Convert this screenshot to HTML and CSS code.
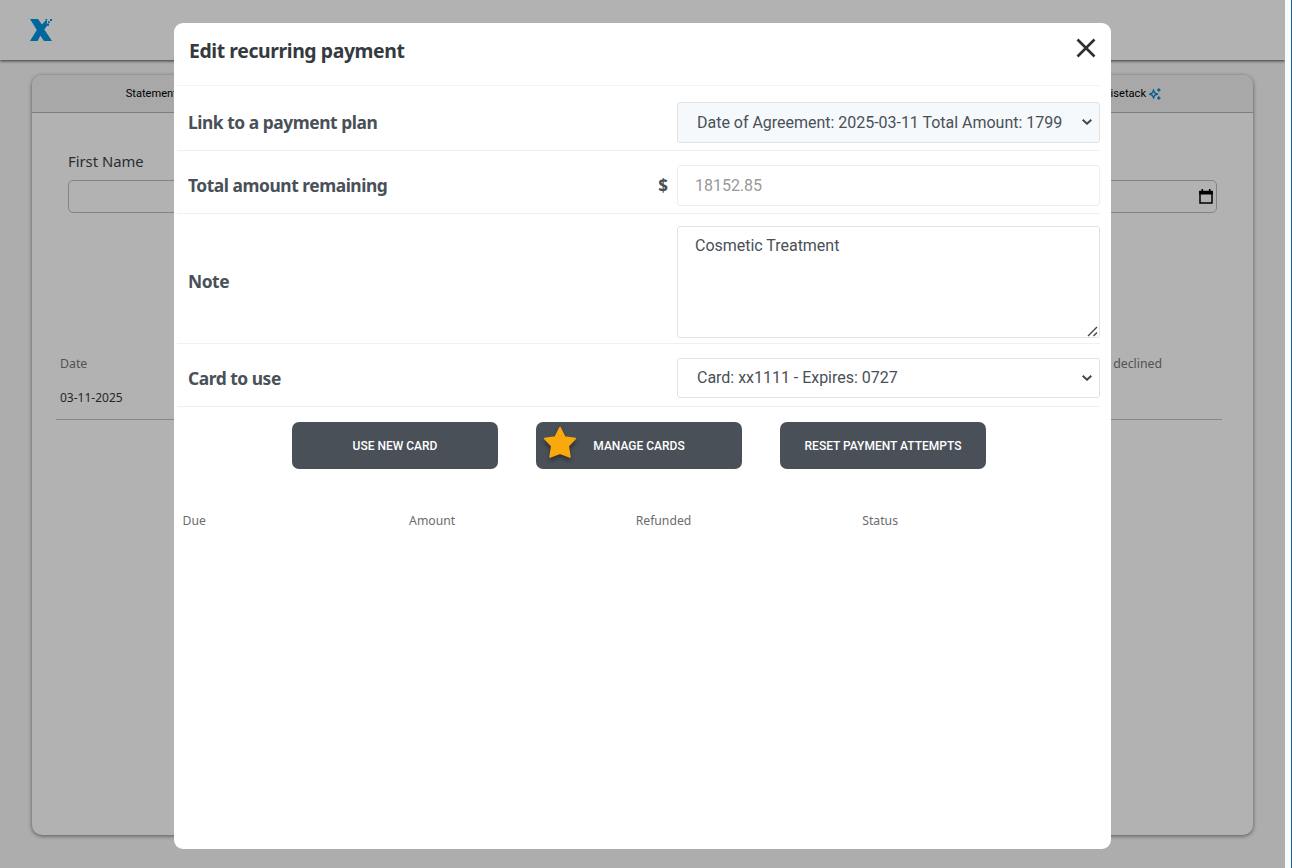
FILE: index.html
```html
<!DOCTYPE html>
<html lang="en">
<head>
    <meta charset="UTF-8">
    <meta name="viewport" content="width=device-width, initial-scale=1.0">
    <title>Edit recurring payment</title>
    <link rel="stylesheet" href="styles.css">
</head>
<body>
    <div class="page">
        <header class="topbar">
            <svg class="logo" width="22" height="22" viewBox="0 0 22 22" fill="#0094e0">
                <path d="M0 0h8l4 5.500 2-2.500 3.500 3-3.200 4.500L22 22h-8l-3.600-5.300L7.500 22H0l6.800-11z"/>
                <path d="M14.500 2H17v2.500h-2.500zM16.500 4.500H19v2.200h-2.500zM15.500 0h1.700v1.700h-1.700zM18 2.200h1.800V4H18zM20 0h2v2h-2z"/>
            </svg>
        </header>

        <!-- Patient card behind the dialog -->
        <main class="card">
            <nav class="tabs">
                <span class="tab">Statements</span>
                <span class="tab"></span>
                <span class="tab"></span>
                <span class="tab"></span>
                <span class="tab">Wisetack
                    <svg width="12" height="12" viewBox="0 0 12 12" fill="none" stroke="#0b83cf" stroke-width="1.3">
                        <path d="M4.500 2.200L5.700 4.900 8.400 6.100 5.700 7.300 4.500 10 3.300 7.300.7 6.100 3.300 4.900z"/>
                        <path d="M9.800.3v3.400M8.100 2h3.400M9.800 8.300v3.400M8.100 10h3.400"/>
                    </svg>
                </span>
            </nav>
            <div class="filters">
                <label class="filter">First Name
                    <input type="text" class="filter-input">
                </label>
                <label class="filter filter-date">
                    <span class="date-box">
                        <svg width="14" height="15" viewBox="0 0 14 15">
                            <path d="M1 2.500h12v11.500H1z" fill="none" stroke="#000" stroke-width="1.500"/>
                            <path d="M.3 2h13.400v3.500H.3zM2.500 0h1.600v3H2.500zM9.900 0h1.600v3H9.900z"/>
                        </svg>
                    </span>
                </label>
            </div>
            <div class="payments">
                <div class="payments-head"><span>Date</span><span class="declined">declined</span></div>
                <div class="payments-row">03-11-2025</div>
            </div>
        </main>
    </div>
    <div class="scroll-track"></div>

    <div class="overlay">
        <section class="modal">
            <div class="modal-header">
                <h1>Edit recurring payment</h1>
                <button class="close" aria-label="Close">
                    <svg width="20" height="20" viewBox="0 0 20 20" stroke="#2b3035" stroke-width="2.600">
                        <path d="M1.500 1.500l17 17M18.500 1.500l-17 17"/>
                    </svg>
                </button>
            </div>

            <div class="row">
                <label>Link to a payment plan</label>
                <div class="select-wrap">
                    <select class="field linked">
                        <option>Date of Agreement: 2025-03-11 Total Amount: 1799</option>
                    </select>
                    <svg class="chevron" width="10" height="6" viewBox="0 0 10 6"><path d="M.7.8L5 4.700 9.300.8"/></svg>
                </div>
            </div>
            <div class="row">
                <label>Total amount remaining</label>
                <span class="currency">$</span>
                <input class="field amount" type="text" value="18152.85" disabled>
            </div>
            <div class="row row-note">
                <label>Note</label>
                <div class="note-wrap">
                    <textarea class="field note">Cosmetic Treatment</textarea>
                    <svg class="grip" width="11" height="11" viewBox="0 0 11 11"><path d="M1 10L10 1M6.500 10L10 6.500"/></svg>
                </div>
            </div>
            <div class="row row-card">
                <label>Card to use</label>
                <div class="select-wrap">
                    <select class="field">
                        <option>Card: xx1111 - Expires: 0727</option>
                    </select>
                    <svg class="chevron" width="10" height="6" viewBox="0 0 10 6"><path d="M.7.8L5 4.700 9.300.8"/></svg>
                </div>
            </div>

            <div class="actions">
                <button class="btn">USE NEW CARD</button>
                <button class="btn">MANAGE CARDS
                    <svg class="star" width="34" height="34" viewBox="0 0 34 34">
                        <path d="M17 1.500l4.900 9.500 10.600 1.500-7.200 7.500 1.700 11L17 27.200 7 31l1.700-11-7.200-7.500L12.100 11z" fill="#f9a90c" stroke="#f9a90c" stroke-width="1.500" stroke-linejoin="round"/>
                    </svg>
                </button>
                <button class="btn">RESET PAYMENT ATTEMPTS</button>
            </div>

            <div class="schedule">
                <span>Due</span>
                <span>Amount</span>
                <span>Refunded</span>
                <span>Status</span>
            </div>
        </section>
    </div>
</body>
</html>
```
FILE: styles.css
```css
* {
    box-sizing: border-box;
}

body {
    margin: 0;
    height: 868px;
    display: flex;
    overflow: hidden;
    font-family: "Noto Sans", sans-serif;
    color: #495057;
}

.page {
    width: 1285px;
    height: 868px;
    background: #f8f8f8;
}

.scroll-track {
    width: 7px;
    background: #fafafa;
    border-right: 1px solid #0d5ea6;
}

.topbar {
    height: 60px;
    padding: 19px 30px;
    background: #fff;
    box-shadow: 0 1px 3px rgba(0, 0, 0, 0.7);
}

.logo {
    display: block;
}

.card {
    width: 1221px;
    height: 760px;
    margin: 15px 0 0 32px;
    background: #fff;
    border-radius: 10px;
    box-shadow: 0 1px 4px rgba(0, 0, 0, 0.5);
    overflow: hidden;
}

.tabs {
    display: flex;
    height: 38px;
    background: #f1f1f1;
    border-bottom: 1px solid #b5b5b5;
}

.tab {
    flex: 1;
    display: flex;
    align-items: center;
    justify-content: center;
    gap: 3px;
    font: 11.1px Roboto, sans-serif;
    color: #000;
}

.filters {
    display: flex;
    justify-content: space-between;
    align-items: flex-end;
    padding: 0 36px;
    height: 100px;
}

.filter {
    display: flex;
    flex-direction: column;
    gap: 8px;
    width: 300px;
    font-size: 14.8px;
    line-height: 22px;
    color: #3c4248;
}

.filter-input,
.date-box {
    height: 33px;
    border: 1px solid #bdbdbd;
    border-radius: 5px;
    background: #fff;
}

.date-box {
    display: flex;
    align-items: center;
    justify-content: flex-end;
    padding-right: 3px;
}

.payments {
    margin: 139px 31px 0 24px;
    padding-left: 4px;
    border-bottom: 1px solid #c0c0c0;
    font-size: 12.3px;
    line-height: 24px;
}

.payments-head {
    display: flex;
    justify-content: space-between;
    padding-right: 60px;
    color: #777;
}

.payments-row {
    padding: 10px 0 9px;
    font-size: 12px;
    color: #33383d;
}

.overlay {
    position: absolute;
    top: 0;
    left: 0;
    width: 1285px;
    height: 868px;
    padding: 23px 174px 19px;
    background: rgba(0, 0, 0, 0.3);
}

.modal {
    width: 937px;
    height: 826px;
    padding: 0 11px 0 3px;
    background: #fff;
    border-radius: 9px;
}

.modal-header {
    display: flex;
    justify-content: space-between;
    align-items: flex-start;
    height: 63px;
    padding: 14px 4px 0 12px;
    border-bottom: 1px solid #f3f3f3;
}

h1 {
    margin: 0;
    font-size: 19.4px;
    font-weight: 700;
    letter-spacing: -0.4px;
    line-height: 28px;
    color: #343a40;
}

.close {
    padding: 0;
    margin-top: 1px;
    border: none;
    background: none;
}

.close svg {
    display: block;
}

.row {
    display: flex;
    align-items: center;
    height: 63px;
    padding: 6px 0 0 11px;
    border-bottom: 1px solid #f0f0f0;
}

.modal-header + .row {
    height: 65px;
    padding-top: 8px;
}

.row-note {
    height: 130px;
}

.row label {
    flex: 1;
    padding-bottom: 1px;
    font-size: 17.4px;
    font-weight: 700;
    letter-spacing: -0.46px;
}

.currency {
    margin-right: 9px;
    font-size: 17px;
    font-weight: 700;
}

.field {
    display: block;
    width: 423px;
    height: 41px;
    margin: 0;
    padding: 0 17px;
    border: 1px solid #e0e3e6;
    border-radius: 3px;
    background: #fff;
    font: 16px Roboto, sans-serif;
    letter-spacing: -0.02px;
    color: #495057;
    outline: none;
}

.select-wrap,
.note-wrap {
    position: relative;
}

select.field {
    appearance: none;
    padding: 0 19px;
}

.linked {
    background: #f5f9fc;
}

.row-card .field {
    height: 40px;
    padding-bottom: 2px;
}

.chevron {
    position: absolute;
    right: 8px;
    top: 17px;
    fill: none;
    stroke: #40464c;
    stroke-width: 2;
}

.amount:disabled {
    border-color: #eceef0;
    color: #999;
}

.note {
    height: 112px;
    padding: 9px 17px;
    resize: none;
}

.grip {
    position: absolute;
    right: 2px;
    bottom: 1px;
    fill: none;
    stroke: #444;
    stroke-width: 1.4;
}

.actions {
    display: flex;
    justify-content: center;
    gap: 38px;
    padding: 15px 0 0 1px;
}

.btn {
    position: relative;
    width: 206px;
    height: 47px;
    padding: 0;
    border: none;
    border-radius: 7px;
    background: #495057;
    color: #fff;
    font: 500 12px Roboto, sans-serif;
}

.star {
    position: absolute;
    left: 7px;
    top: 4px;
    filter: drop-shadow(0 3px 2px rgba(0, 0, 0, 0.4));
}

.schedule {
    display: grid;
    grid-template-columns: repeat(4, 226.6px);
    padding: 43px 0 0 5.5px;
    font-size: 12.2px;
    line-height: 18px;
    color: #6c6c6c;
}
```
